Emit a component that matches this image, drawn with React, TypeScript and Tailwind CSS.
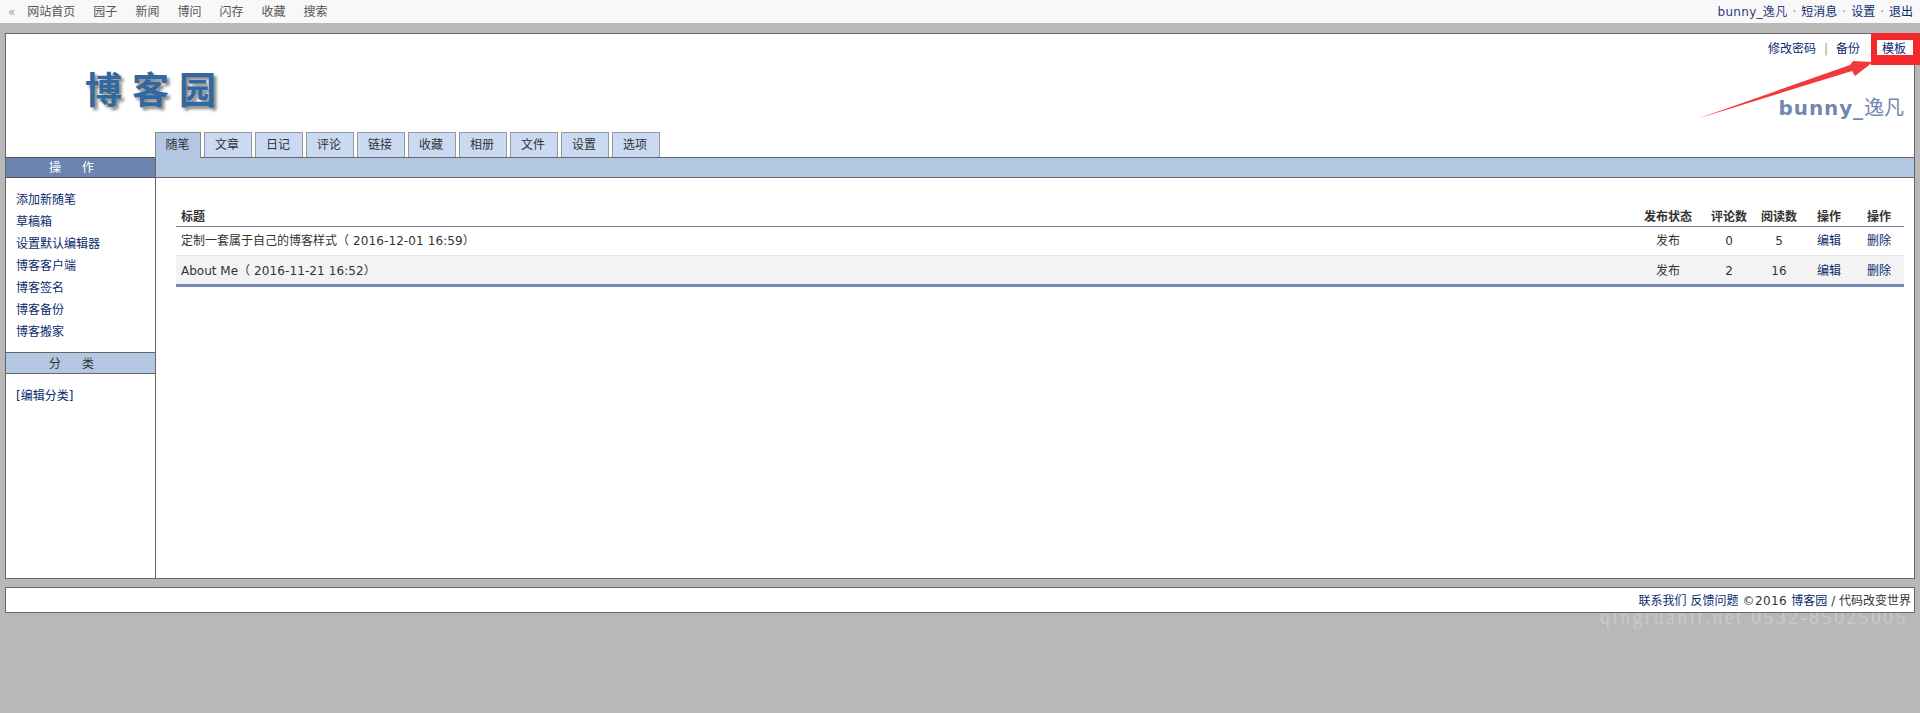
import React from "react";

const cjk = "font-['DejaVu_Sans','Noto_Sans_CJK_SC',sans-serif]";
const navItems = ["网站首页", "园子", "新闻", "博问", "闪存", "收藏", "搜索"];
const tabs = ["文章", "日记", "评论", "链接", "收藏", "相册", "文件", "设置", "选项"];
const sideLinks = ["添加新随笔", "草稿箱", "设置默认编辑器", "博客客户端", "博客签名", "博客备份", "博客搬家"];
const rows = [
  { title: "定制一套属于自己的博客样式", date: "2016-12-01 16:59", status: "发布", comments: 0, reads: 5 },
  { title: "About Me", date: "2016-11-21 16:52", status: "发布", comments: 2, reads: 16 },
];

function Annotation() {
  return (
    <>
      <svg className="absolute left-0 top-0 pointer-events-none" width="1920" height="713" viewBox="0 0 1920 713">
        <path fillRule="evenodd" fill="#f3282b" d="M1871 33H1920V65H1871ZM1877 40V55H1913V40Z" />
        <path fill="#f4393a" d="M1698 118.5L1850 65L1853 61L1873 62L1855 76L1852 71Z" />
      </svg>
      <div className="absolute left-[1600px] top-[604px] text-[20px] leading-[26px] tracking-[2.3px] text-white/25 font-['Liberation_Serif',serif] whitespace-nowrap">
        qingruanit.net 0532-85025005
      </div>
    </>
  );
}

export default function App() {
  return (
    <div className={`relative h-[713px] overflow-hidden bg-[#b8b8b8] text-[12px] text-[#333] ${cjk}`}>
      <div className="flex h-[23px] items-center justify-between bg-[#f8f8f8] pl-[8px] pr-[7px] text-[#555]">
        <div className="flex items-center">
          <span className="mr-[12px] text-[#999]">«</span>
          <div className="flex gap-[18px]">
            {navItems.map((n) => (
              <span key={n}>{n}</span>
            ))}
          </div>
        </div>
        <div className="flex gap-[5px] text-[#0a2a6e]">
          <span className="text-[#333a80] tracking-[0.3px]">bunny_逸凡</span>
          <span className="text-[#888]">·</span>
          <span>短消息</span>
          <span className="text-[#888]">·</span>
          <span>设置</span>
          <span className="text-[#888]">·</span>
          <span>退出</span>
        </div>
      </div>

      <div className="mx-[5px] mt-[10px] flex h-[546px] flex-col border border-[#666] bg-white">
        <div className="flex h-[123px]">
          <div className="w-[150px] shrink-0 pl-[79px] pt-[30px]">
            <div className="flex gap-[10px] whitespace-nowrap font-['Noto_Sans_CJK_SC',sans-serif] text-[37px] font-bold leading-[48px] text-[#30689f] [text-shadow:3px_3px_3px_#8a8a8a]">
              <span>博</span>
              <span>客</span>
              <span>园</span>
            </div>
          </div>
          <div className="flex min-w-0 flex-1 flex-col">
            <div className="flex h-[30px] items-center justify-end pr-[8px] text-[#0a2a6e]">
              <span>修改密码</span>
              <span className="mx-[8px] text-[#999]">|</span>
              <span>备份</span>
              <span className="ml-[22px]">模板</span>
            </div>
            <div className="mt-[30px] flex items-baseline justify-end pr-[10px] text-[20px] font-bold leading-[28px] text-[#7388b0]">
              <span className="tracking-[0.9px]">bunny_</span>
              <span className="font-normal">逸凡</span>
            </div>
            <div className="mt-auto -ml-px flex items-end gap-[3px] text-[#333]">
              <div className="relative z-10 -mb-px flex h-[26px] w-[46px] items-center justify-center border border-b-0 border-[#888] bg-[#b3c7e3] pb-[2px] pr-[1px]">
                随笔
              </div>
              {tabs.map((t) => (
                <div key={t} className="flex h-[25px] w-[48px] items-center justify-center border border-b-0 border-[#999] bg-[#c9daf2] pr-[2px]">
                  {t}
                </div>
              ))}
            </div>
          </div>
        </div>

        <div className="flex min-h-0 flex-1">
          <div className="w-[150px] shrink-0 border-r border-[#666]">
            <div className="flex h-[21px] items-center gap-[21px] border-y border-[#555] bg-[#6b84b0] pl-[43px] text-white">
              <span>操</span>
              <span>作</span>
            </div>
            <div className="flex flex-col pt-[11px] pl-[10px] text-[#0a2a6e]">
              {sideLinks.map((s) => (
                <div key={s} className="flex h-[22px] items-center">
                  {s}
                </div>
              ))}
            </div>
            <div className="mt-[9px] flex h-[22px] items-center gap-[21px] border-y border-[#666] bg-[#b3c7e3] pl-[43px] pt-[1px]">
              <span>分</span>
              <span>类</span>
            </div>
            <div className="pl-[10px] pt-[13px] text-[#0a2a6e]">[编辑分类]</div>
          </div>
          <div className="min-w-0 flex-1">
            <div className="h-[21px] border-y border-[#666] bg-[#b3c7e3]" />
            <div className="pl-[20px] pr-[10px] pt-[26px]">
              <table className="w-full table-fixed border-collapse">
                <colgroup>
                  <col />
                  <col className="w-[70px]" />
                  <col className="w-[50px]" />
                  <col className="w-[50px]" />
                  <col className="w-[50px]" />
                  <col className="w-[50px]" />
                </colgroup>
                <thead>
                  <tr className="h-[22px] border-b border-[#7a869c] font-bold">
                    <th className="pl-[5px] pt-[4px] text-left">标题</th>
                    <th className="pt-[4px] pr-[2px]">发布状态</th>
                    <th className="pt-[4px]">评论数</th>
                    <th className="pt-[4px]">阅读数</th>
                    <th className="pt-[4px]">操作</th>
                    <th className="pt-[4px]">操作</th>
                  </tr>
                </thead>
                <tbody className="text-center">
                  {rows.map((r, i) => {
                    const pad = i === 0 ? "" : "pt-[2px]";
                    return (
                      <tr key={r.title} className={i === 0 ? "h-[29px] border-b border-[#e6e6e6]" : "h-[30px] border-b-[3px] border-[#7388b5] bg-[#f3f3f3]"}>
                        <td className={`pl-[5px] text-left ${pad}`}>
                          {r.title}（<span className="ml-[4px] tracking-[0.1px]">{r.date}</span>）
                        </td>
                        <td className={`pr-[2px] ${pad}`}>{r.status}</td>
                        <td className={pad}>{r.comments}</td>
                        <td className={pad}>{r.reads}</td>
                        <td className={`text-[#0a2a6e] ${pad}`}>编辑</td>
                        <td className={`text-[#0a2a6e] ${pad}`}>删除</td>
                      </tr>
                    );
                  })}
                </tbody>
              </table>
            </div>
          </div>
        </div>
      </div>

      <div className="ml-[5px] mr-[5px] mt-[8px] flex h-[26px] items-center justify-end gap-[4px] border border-[#666] bg-white pr-[3px] pt-[1px]">
        <span className="text-[#0a2a6e]">联系我们</span>
        <span className="text-[#0a2a6e]">反馈问题</span>
        <span className="tracking-[0.4px]">©2016</span>
        <span className="text-[#0a2a6e]">博客园</span>
        <span>/ 代码改变世界</span>
      </div>

      <Annotation />
    </div>
  );
}
